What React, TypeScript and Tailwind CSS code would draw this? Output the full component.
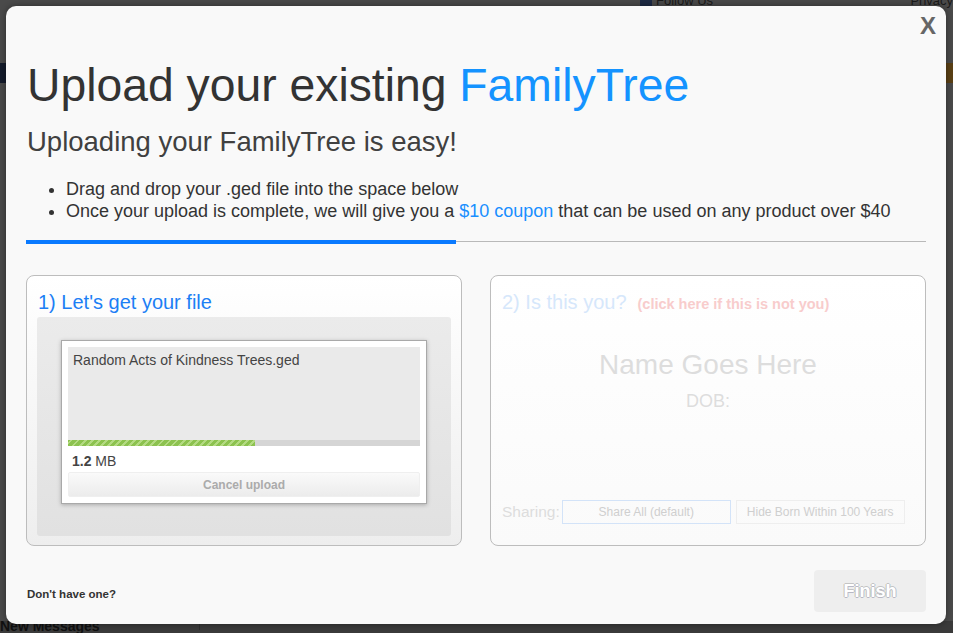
import React from "react";

const F = { fontFamily: '"Liberation Sans", Arial, sans-serif' };

export default function App() {
  return (
    <div
      className="relative w-[953px] h-[633px] overflow-hidden bg-[#4a4a4a] text-[#222]"
      style={F}
    >
      {/* dimmed page behind the overlay */}
      <div className="flex flex-col w-full h-full">
        <div className="flex h-[63px] items-start">
          <div className="flex items-center gap-1 ml-[640px] -mt-[7px] text-[13px] leading-[15px] text-[#1a1a1a]">
            <span className="inline-block w-[12px] h-[12px] bg-[#1d2a44]" />
            <span>Follow Us</span>
          </div>
          <div className="ml-auto -mt-[7px] text-[13px] leading-[15px] text-[#1a1a1a]">Privacy</div>
        </div>
        <div className="flex h-[20px]">
          <div className="w-[8px] bg-[#141b2b]" />
          <div className="flex-1" />
          <div className="w-[8px] bg-[#5a4015]" />
        </div>
        <div className="flex-1" />
        <div className="flex h-[12px] bg-[#3a3a3a] items-start">
          <div className="w-[200px] border-r border-[#2e2e2e] h-full -mt-[3px] text-[14px] leading-[16px] font-bold text-[#111]">
            New Messages
          </div>
        </div>
      </div>

      {/* modal */}
      <div className="absolute left-[6px] top-[6px] w-[940px] h-[618px] rounded-[10px] bg-[#f9f9f9] shadow-[0_0_6px_rgba(0,0,0,0.4)]">
        <div className="flex flex-col px-[20px] h-full">
          <div className="flex justify-end h-[48px] pt-[6px] -mr-[10px]">
            <span className="text-[24px] leading-[28px] font-bold text-[#666]">X</span>
          </div>
          <h1 className="text-[46.3px] leading-[46px] text-[#333] ml-[1px] mt-[8px]">
            Upload your existing <span className="text-[#1493ff]">FamilyTree</span>
          </h1>
          <h2 className="text-[27.5px] leading-[28px] text-[#404040] ml-[1px] mt-[20px]">
            Uploading your FamilyTree is easy!
          </h2>
          <ul className="mt-[22px] ml-[40px] list-disc text-[18px] leading-[22px] text-[#333]">
            <li>Drag and drop your .ged file into the space below</li>
            <li>
              Once your upload is complete, we will give you a{" "}
              <span className="text-[#1a8fff]">$10 coupon</span> that can be used on
              any product over $40
            </li>
          </ul>
          <div className="flex items-start mt-[18px] h-[4px]">
            <div className="w-[430px] h-[4px] bg-[#0a7aff]" />
            <div className="flex-1 h-px mt-[1px] bg-[#b9b9b9]" />
          </div>

          <div className="flex justify-between mt-[31px]">
            {/* left panel */}
            <div className="w-[436px] h-[271px] rounded-[8px] border border-[#bdbdbd] bg-gradient-to-b from-white to-[#eeeeee] flex flex-col px-[10px] pb-[9px]">
              <div className="text-[20px] leading-[20px] text-[#1c7ff5] ml-[1px] mt-[16px]">
                1) Let's get your file
              </div>
              <div className="mt-[5px] flex-1 rounded-[3px] bg-gradient-to-b from-[#ebebeb] to-[#e1e1e1] flex justify-center pt-[23px]">
                <div className="w-[366px] h-[164px] bg-white border border-[#a9a9a9] shadow-[0_1px_4px_rgba(0,0,0,0.25)] p-[6px] flex flex-col">
                  <div className="h-[94px] bg-[#eaeaea] text-[14px] leading-[16px] text-[#444] pl-[5px] pt-[5px]">
                    Random Acts of Kindness Trees.ged
                  </div>
                  <div className="h-[6px] bg-[#d5d5d5] flex">
                    <div className="w-[187px] h-full bg-[repeating-linear-gradient(-45deg,#8cc24f_0px,#8cc24f_3px,#b3da82_3px,#b3da82_5px)]" />
                  </div>
                  <div className="text-[14px] leading-[16px] text-[#444] pl-[4px] mt-[7px]">
                    <span className="font-bold">1.2</span> MB
                  </div>
                  <div className="mt-[3px] h-[25px] rounded-[2px] border border-[#efefef] bg-gradient-to-b from-[#fafafa] to-[#ececec] flex items-center justify-center text-[12px] font-bold text-[#ababab]">
                    Cancel upload
                  </div>
                </div>
              </div>
            </div>

            {/* right panel */}
            <div className="w-[436px] h-[271px] rounded-[8px] border border-[#bdbdbd] bg-gradient-to-b from-white to-[#fafafa] flex flex-col px-[11px]">
              <div className="flex items-baseline mt-[16px] h-[20px]">
                <span className="text-[20px] leading-[20px] text-[#d6e7fb]">2) Is this you?</span>
                <span className="ml-[11px] text-[14.5px] leading-[16px] font-bold text-[#f8cccc]">
                  (click here if this is not you)
                </span>
              </div>
              <div className="mt-[39px] text-center text-[28px] leading-[28px] text-[#dddddd]">
                Name Goes Here
              </div>
              <div className="mt-[12px] text-center text-[18px] leading-[20px] text-[#dddddd]">
                DOB:
              </div>
              <div className="flex items-center mt-auto mb-[21px]">
                <span className="text-[15.5px] text-[#dddddd] mr-[2px]">Sharing:</span>
                <div className="w-[169px] h-[24px] border border-[#d3e3f8] flex items-center justify-center text-[12px] text-[#cfcfcf]">
                  Share All (default)
                </div>
                <div className="ml-[5px] w-[169px] h-[24px] border border-[#eeeeee] flex items-center justify-center text-[12px] text-[#cfcfcf]">
                  Hide Born Within 100 Years
                </div>
              </div>
            </div>
          </div>

          <div className="flex items-end justify-between mt-[24px]">
            <span className="text-[11.5px] font-bold text-[#333] ml-[1px] mb-[9px]">
              Don't have one?
            </span>
            <div className="w-[112px] h-[42px] rounded-[4px] bg-[#eeeeee] flex items-center justify-center text-[18px] font-bold text-white [text-shadow:1px_0_0_#b4c0d0,-1px_0_0_#c8bfb4,0_1px_0_#b8b8c4,0_-1px_0_#c4c4c4]">
              Finish
            </div>
          </div>
        </div>
      </div>
    </div>
  );
}
